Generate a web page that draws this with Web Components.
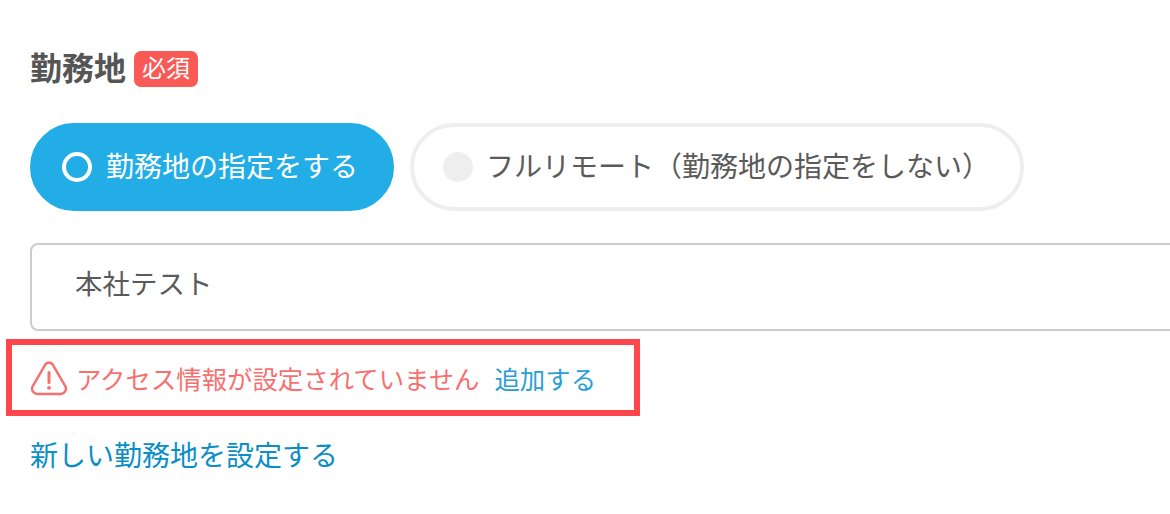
<!DOCTYPE html>
<html lang="ja"><head><meta charset="utf-8">
<style>
html,body{margin:0;padding:0;background:#fff;overflow:hidden}
body{font-family:"Noto Sans CJK JP","Noto Sans",sans-serif;color:#555;width:1170px;height:514px}
</style></head><body>
<location-form></location-form>
<script>
function def(name,html){customElements.define(name,class extends HTMLElement{constructor(){super();this.attachShadow({mode:'open'}).innerHTML=html}})}
def('field-label',`<style>:host{display:flex;align-items:center;height:36px;gap:8px;font-size:32px;font-weight:700;color:#555;line-height:36px}
.t{margin-top:-7px}
.b{display:flex;align-items:center;justify-content:center;width:64px;height:36px;border-radius:7px;background:#fa5a56;color:#fff;font-size:24px;font-weight:400;line-height:32px;padding-bottom:4px;box-sizing:border-box}</style><span class="t"><slot></slot></span><span class="b">必須</span>`);
def('radio-pill',`<style>:host{display:flex;align-items:center;box-sizing:border-box;height:88px;border-radius:44px;font-size:28px;line-height:40px;color:#5a5a5a;border:4px solid #eee;padding:0 30px 0 29px;gap:13px;white-space:nowrap}
:host([checked]){background:#22ade6;border-color:#22ade6;color:#fff;padding:0 32px 0 28px;gap:14px}
i{display:block;box-sizing:border-box;width:30px;height:30px;border-radius:50%;background:#eee;flex:none}
:host([checked]) i{background:transparent;border:4px solid #fff}
span{margin-top:-4px}</style><i></i><span><slot></slot></span>`);
def('text-box',`<style>:host{display:flex;align-items:center;box-sizing:border-box;height:88px;width:1160px;border:2px solid #ccc;border-radius:8px;padding:0 43px 10px;font-size:27.500px;color:#5a5a5a}</style><slot></slot>`);
def('warn-note',`<style>:host{display:flex;align-items:center;box-sizing:border-box;width:634px;height:77px;border:6px solid #ff474b;padding:0 0 0 18px;font-size:25.400px;color:#f86f70;white-space:nowrap}
svg{width:38px;height:36px;flex:none;margin-right:8px}
a{color:#2a9fd6;margin-left:15px}</style>
<svg viewBox="0 0 38 36" fill="none"><path d="M15 5.200 2.900 25.800C.5 30 3.400 34 7.800 34H30.200C34.600 34 37.500 30 35.100 25.800L23 5.200C21 1.600 17 1.600 15 5.200Z" stroke="#f86f70" stroke-width="2.400" stroke-linejoin="round"/><path d="M19 12.500v10" stroke="#f86f70" stroke-width="3" stroke-linecap="round"/><circle cx="19" cy="27.800" r="1.900" fill="#f86f70"/></svg>
<span><slot></slot></span><a><slot name="link"></slot></a>`);
def('text-link',`<style>:host{display:block;font-size:28px;line-height:40px;color:#0b8ec6}</style><slot></slot>`);
def('location-form',`<style>:host{display:flex;flex-direction:column;padding:51px 0 0 30px}
.r{display:flex;gap:16px;margin-top:36px}
text-box{margin-top:32px}
warn-note{margin:8px 0 0 -24px}
text-link{margin-top:18px}</style>
<field-label>勤務地</field-label>
<div class="r"><radio-pill checked>勤務地の指定をする</radio-pill><radio-pill>フルリモート（勤務地の指定をしない）</radio-pill></div>
<text-box>本社テスト</text-box>
<warn-note>アクセス情報が設定されていません<span slot="link">追加する</span></warn-note>
<text-link>新しい勤務地を設定する</text-link>`);
</script>
</body></html>
